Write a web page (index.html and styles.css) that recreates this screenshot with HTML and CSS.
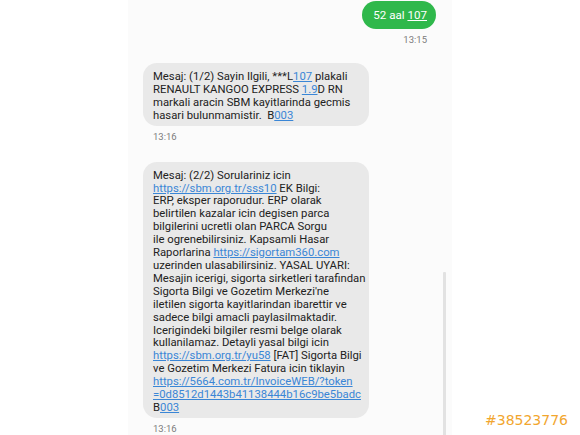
FILE: index.html
```html
<!DOCTYPE html>
<html>
<head>
<meta charset="utf-8">
<link rel="stylesheet" href="styles.css">
</head>
<body>
<div class="page">
  <div class="phone">
    <div class="row out">
      <div class="bubble-out">52 aal <span class="u">107</span></div>
    </div>
    <div class="time time-out">13:15</div>

    <div class="row in">
      <div class="bubble-in">Mesaj: (1/2) Sayin Ilgili, ***L<a>107</a> plakali<br>RENAULT KANGOO EXPRESS <a>1.9</a>D RN<br>markali aracin SBM kayitlarinda gecmis<br>hasari bulunmamistir.&nbsp; B<a>003</a></div>
    </div>
    <div class="time">13:16</div>

    <div class="row in second">
      <div class="bubble-in">Mesaj: (2/2) Sorulariniz icin<br><a>https://sbm.org.tr/sss10</a> EK Bilgi:<br>ERP, eksper raporudur. ERP olarak<br>belirtilen kazalar icin degisen parca<br>bilgilerini ucretli olan PARCA Sorgu<br>ile ogrenebilirsiniz. Kapsamli Hasar<br>Raporlarina <a>https://sigortam360.com</a><br>uzerinden ulasabilirsiniz. YASAL UYARI:<br>Mesajin icerigi, sigorta sirketleri tarafindan<br>Sigorta Bilgi ve Gozetim Merkezi'ne<br>iletilen sigorta kayitlarindan ibarettir ve<br>sadece bilgi amacli paylasilmaktadir.<br>Icerigindeki bilgiler resmi belge olarak<br>kullanilamaz. Detayli yasal bilgi icin<br><a>https://sbm.org.tr/yu58</a> [FAT] Sigorta Bilgi<br>ve Gozetim Merkezi Fatura icin tiklayin<br><a>https://5664.com.tr/InvoiceWEB/?token</a><br><a>=0d8512d1443b41138444b16c9be5badc</a><br>B<a>003</a></div>
    </div>
    <div class="time">13:16</div>

    <div class="scrollbar"></div>
  </div>
  <div class="side">
    <div class="code">#38523776</div>
  </div>
</div>
</body>
</html>
```

FILE: styles.css
```css
html, body {
  margin: 0;
  padding: 0;
  background: #ffffff;
}
.page {
  width: 580px;
  height: 435px;
  overflow: hidden;
  display: flex;
  padding-left: 128px;
  box-sizing: border-box;
}
.phone {
  position: relative;
  width: 324px;
  height: 435px;
  background: #fbfbfb;
  padding: 1px 16px 0 15px;
  box-sizing: border-box;
  font-family: Roboto, "Noto Sans", sans-serif;
  display: flex;
  flex-direction: column;
}
.row {
  display: flex;
}
.row.out {
  justify-content: flex-end;
}
.bubble-out {
  background: #2fb84b;
  color: #ffffff;
  height: 28px;
  line-height: 28px;
  font-size: 11.6px;
  padding: 0 9px 0 11px;
  border-radius: 14px;
}
.u {
  text-decoration: underline;
}
.time {
  font-size: 9.5px;
  color: #7b7b7b;
  line-height: 12px;
  margin-top: 5px;
  padding-left: 10px;
}
.time-out {
  text-align: right;
  padding-right: 9px;
  padding-left: 0;
}
.row.in {
  margin-top: 17px;
}
.row.in.second {
  margin-top: 19px;
}
.bubble-in {
  background: #e9e9e9;
  color: #222222;
  width: 226px;
  box-sizing: border-box;
  padding: 8px 8px 3px 10px;
  border-radius: 14px;
  font-size: 11.3px;
  line-height: 12.9px;
  white-space: nowrap;
}
.bubble-in a {
  color: #3a86d6;
  text-decoration: underline;
}
.scrollbar {
  position: absolute;
  left: 315px;
  top: 272px;
  width: 3px;
  height: 170px;
  background: #e2e2e2;
  border-radius: 1px;
}
.side {
  flex: 1;
  display: flex;
  align-items: flex-end;
  justify-content: flex-end;
  padding: 0 12px 7px 0;
}
.code {
  font-family: "DejaVu Sans", sans-serif;
  font-size: 14px;
  color: #f2a62e;
  line-height: 16px;
}
```
